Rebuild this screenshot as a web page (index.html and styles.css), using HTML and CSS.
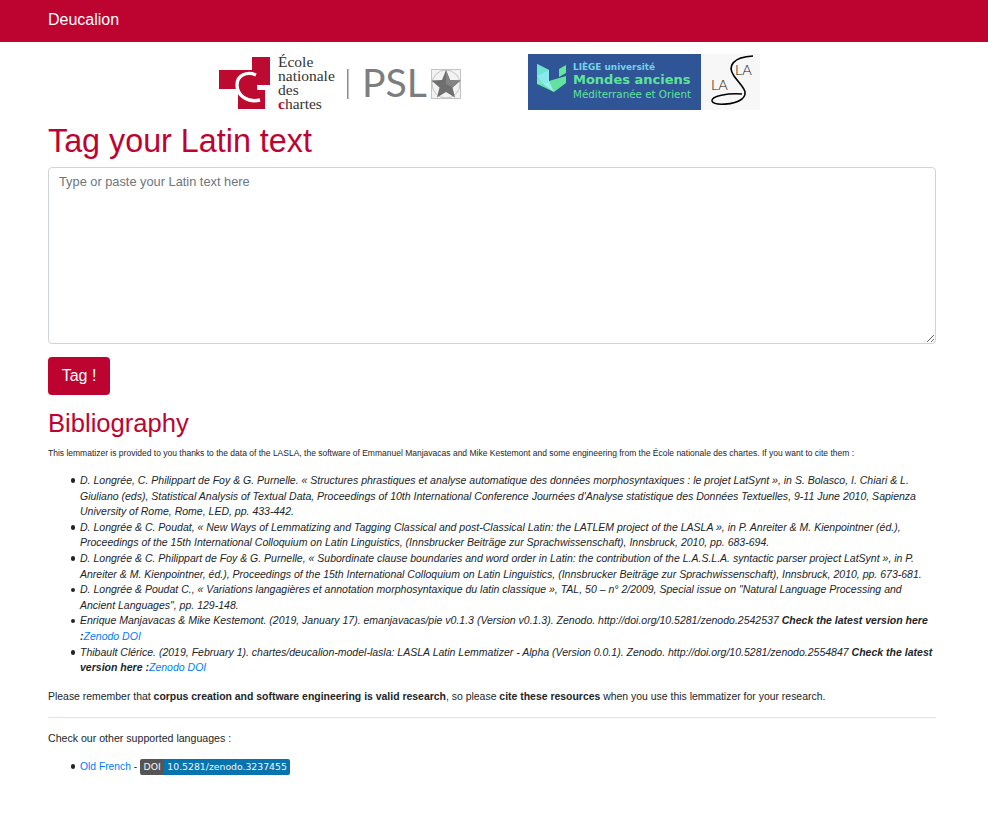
FILE: index.html
```html
<!DOCTYPE html>
<html lang="en">
<head>
<meta charset="utf-8">
<title>Deucalion</title>
<link rel="stylesheet" href="styles.css">
</head>
<body>
<nav class="navbar"><a class="brand" href="#">Deucalion</a></nav>
<main class="container">
  <div class="logos">
    <svg class="logo-enc" width="243" height="60" viewBox="0 0 243 60">
      <path d="M33 3H51V31H38V35H0V16H33Z" fill="#bd0a30"/>
      <rect x="19" y="35" width="27" height="20" fill="#bd0a30"/>
      <path d="M37 21C28 17 18 21 18 31C18 41 28 49 41 46" stroke="#fff" stroke-width="3.400" fill="none"/>
      <path d="M38 33.500H52" stroke="#fff" stroke-width="5"/>
      <text class="enc" x="59" y="13">École</text>
      <text class="enc" x="59" y="27">nationale</text>
      <text class="enc" x="59" y="41">des</text>
      <text class="enc" x="59" y="55"><tspan class="enc-c">c</tspan>hartes</text>
      <rect x="128" y="15" width="1.500" height="30" fill="#8a8a8a"/>
      <text class="psl" x="143" y="43" textLength="65" lengthAdjust="spacingAndGlyphs">PSL</text>
      <rect x="212.500" y="15.500" width="29" height="29" fill="#f2f2f2" stroke="#c4c4c4"/>
      <circle cx="227" cy="30" r="14" fill="none" stroke="#c4c4c4"/>
      <path d="M227 16L231 26L241.500 26.500L233.500 33.500L236 43.500L227 38L218 43.500L220.500 33.500L212.500 26.500L223 26Z" fill="#6f6f6f"/>
      <path d="M227 16L231 26L241.500 26.500L233.500 33.500L227 30Z" fill="#858585"/>
    </svg>
    <svg class="logo-liege" width="232" height="56" viewBox="0 0 232 56">
      <rect width="173" height="56" fill="#2f5597"/>
      <path d="M9 10L21 16V27L38 22V29L26 38L9 30Z" fill="#63e29e"/>
      <path d="M9 10L21 16L9 22Z" fill="#6fe3d0"/>
      <path d="M9 22L21 16V27L15 30Z" fill="#8be8ee"/>
      <path d="M15 30L26 38L21 27Z" fill="#98eef0"/>
      <path d="M9 30L15 30L9 24Z" fill="#7fe4c8"/>
      <path d="M31 15L38 11V19L31 23Z" fill="#66e39c"/>
      <text class="lg-a" x="45" y="16" textLength="82" lengthAdjust="spacingAndGlyphs">LIÈGE université</text>
      <text class="lg-b" x="45" y="30">Mondes anciens</text>
      <text class="lg-c" x="45" y="44" textLength="118" lengthAdjust="spacingAndGlyphs">Méditerranée et Orient</text>
      <rect x="173" width="59" height="56" fill="#f7f7f7"/>
      <text class="la" x="183" y="36">LA</text>
      <text class="la" x="207" y="21">LA</text>
      <path d="M225 2C205 3 199 12 206 22C213 32 222 38 214 45C206 51 186 52 184 47C183 42 200 39 214 40" stroke="#000" stroke-width="1.600" fill="none"/>
    </svg>
  </div>
  <h1 class="title">Tag your Latin text</h1>
  <form class="tag-form">
    <textarea class="input" placeholder="Type or paste your Latin text here"></textarea>
    <button class="btn" type="button">Tag !</button>
  </form>
  <h2 class="subtitle">Bibliography</h2>
  <p class="tiny">This lemmatizer is provided to you thanks to the data of the LASLA, the software of Emmanuel Manjavacas and Mike Kestemont and some engineering from the École nationale des chartes. If you want to cite them :</p>
  <ul class="refs">
    <li><em>D. Longrée, C. Philippart de Foy &amp; G. Purnelle. « Structures phrastiques et analyse automatique des données morphosyntaxiques : le projet LatSynt », in S. Bolasco, I. Chiari &amp; L. Giuliano (eds), Statistical Analysis of Textual Data, Proceedings of 10th International Conference Journées d'Analyse statistique des Données Textuelles, 9-11 June 2010, Sapienza University of Rome, Rome, LED, pp. 433-442.</em></li>
    <li><em>D. Longrée &amp; C. Poudat, « New Ways of Lemmatizing and Tagging Classical and post-Classical Latin: the LATLEM project of the LASLA », in P. Anreiter &amp; M. Kienpointner (éd.), Proceedings of the 15th International Colloquium on Latin Linguistics, (Innsbrucker Beiträge zur Sprachwissenschaft), Innsbruck, 2010, pp. 683-694.</em></li>
    <li><em>D. Longrée &amp; C. Philippart de Foy &amp; G. Purnelle, « Subordinate clause boundaries and word order in Latin: the contribution of the L.A.S.L.A. syntactic parser project LatSynt », in P. Anreiter &amp; M. Kienpointner, éd.), Proceedings of the 15th International Colloquium on Latin Linguistics, (Innsbrucker Beiträge zur Sprachwissenschaft), Innsbruck, 2010, pp. 673-681.</em></li>
    <li><em>D. Longrée &amp; Poudat C., « Variations langagières et annotation morphosyntaxique du latin classique », TAL, 50 – n° 2/2009, Special issue on "Natural Language Processing and Ancient Languages", pp. 129-148.</em></li>
    <li><em>Enrique Manjavacas &amp; Mike Kestemont. (2019, January 17). emanjavacas/pie v0.1.3 (Version v0.1.3). Zenodo. http://doi.org/10.5281/zenodo.2542537 <strong>Check the latest version here :</strong><a href="#">Zenodo DOI</a></em></li>
    <li><em>Thibault Clérice. (2019, February 1). chartes/deucalion-model-lasla: LASLA Latin Lemmatizer - Alpha (Version 0.0.1). Zenodo. http://doi.org/10.5281/zenodo.2554847 <strong>Check the latest version here :</strong><a href="#">Zenodo DOI</a></em></li>
  </ul>
  <p class="note">Please remember that <strong>corpus creation and software engineering is valid research</strong>, so please <strong>cite these resources</strong> when you use this lemmatizer for your research.</p>
  <hr class="rule">
  <p class="note note-check">Check our other supported languages :</p>
  <ul class="langs">
    <li><a href="#">Old French</a> - <span class="badge"><span class="badge-l">DOI</span><span class="badge-r">10.5281/zenodo.3237455</span></span></li>
  </ul>
</main>
</body>
</html>
```
FILE: styles.css
```css
* { box-sizing: border-box; }
body {
  margin: 0;
  font-family: "Liberation Sans", Arial, sans-serif;
  font-size: 10.4px;
  line-height: 15.6px;
  color: #212529;
  background: #fff;
}
a { color: #007bff; text-decoration: none; }
.navbar {
  height: 42px;
  background: #bd0430;
  padding: 0 48px;
  display: flex;
  align-items: center;
}
.brand { color: #fff; font-size: 16px; line-height: 20px; margin-top: -3px; }
.container { padding: 12px 52px 0 48px; width: 988px; }
.logos { display: flex; height: 56px; padding-left: 171px; gap: 66px; }
.logos svg { display: block; flex: none; }
.title { margin: 11px 0 6px; font-size: 32.300px; line-height: 40px; font-weight: 400; color: #bd0430; }
.tag-form { display: flex; flex-direction: column; align-items: flex-start; }
.input {
  display: block;
  width: 888px;
  height: 177px;
  padding: 4px 10px;
  border: 1px solid #ced4da;
  border-radius: 4px;
  font: 12.800px/19.200px "Liberation Sans", Arial, sans-serif;
  color: #495057;
  resize: vertical;
}
.input::placeholder { color: #6c757d; opacity: 1; }
.btn {
  margin-top: 13px;
  height: 38px;
  width: 62px;
  padding: 0;
  background: #bd0430;
  color: #fff;
  border: 0;
  border-radius: 4px;
  font: 16px/24px "Liberation Sans", Arial, sans-serif;
}
.subtitle { margin: 13px 0 8px; font-size: 25.600px; line-height: 31px; font-weight: 400; color: #bd0430; }
.tiny { margin: 0 0 13.500px; font-size: 8.500px; line-height: 12.480px; }
.refs, .langs { margin: 0; padding: 0 0 0 32px; list-style: none; }
.refs li, .langs li { position: relative; }
.refs li::before, .langs li::before {
  content: "";
  position: absolute;
  left: -9.500px;
  top: 5.500px;
  width: 4.500px;
  height: 4.500px;
  border-radius: 50%;
  background: #212529;
}
.refs { width: 888px; margin-bottom: 13px; font-size: 10.520px; }
.note { margin: 0; font-size: 10.450px; }
.note-check { font-size: 10.600px; }
.rule { width: 888px; height: 0; margin: 13px 0 13px; border: 0; border-top: 1px solid #e3e3e3; }
.langs { margin-top: 12px; font-size: 10.300px; }
.badge { display: inline-flex; vertical-align: top; height: 16px; border-radius: 2px; overflow: hidden; font-family: "DejaVu Sans", sans-serif; font-size: 9.300px; line-height: 16px; color: #f6f6f6; }
.badge-l { background: #555; padding: 0 3.500px; }
.badge-r { background: #0774b0; padding: 0 3px; }
.enc { font-family: "Liberation Serif", serif; font-size: 15.500px; fill: #333; }
.enc-c { fill: #bd0a30; font-weight: 700; }
.psl { font-family: "Lato", "Liberation Sans", sans-serif; font-weight: 400; font-size: 38px; fill: #7d7d7d; }
.lg-a { font-family: "DejaVu Sans", sans-serif; font-size: 9.500px; font-weight: 700; fill: #74d3ea; }
.lg-b { font-family: "DejaVu Sans", sans-serif; font-size: 13px; font-weight: 700; fill: #5fe39b; }
.lg-c { font-family: "DejaVu Sans", sans-serif; font-size: 10px; fill: #5fe39b; }
.la { font-family: "Lato", "Liberation Sans", sans-serif; font-weight: 300; font-size: 14.500px; fill: #111; }
```
